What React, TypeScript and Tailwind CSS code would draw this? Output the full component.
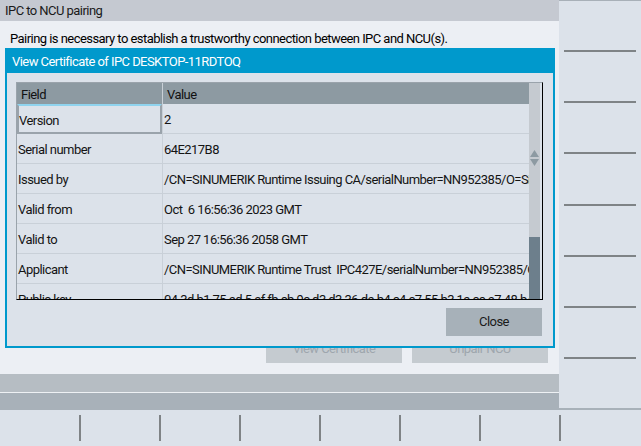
import React from "react";

const font = { fontFamily: 'Roboto, "Liberation Sans", sans-serif', letterSpacing: "-0.55px" };

const rows: [string, string][] = [
  ["Version", "2"],
  ["Serial number", "64E217B8"],
  ["Issued by", "/CN=SINUMERIK Runtime Issuing CA/serialNumber=NN952385/O=Siemens"],
  ["Valid from", "Oct  6 16:56:36 2023 GMT"],
  ["Valid to", "Sep 27 16:56:36 2058 GMT"],
  ["Applicant", "/CN=SINUMERIK Runtime Trust  IPC427E/serialNumber=NN952385/O=Siemens"],
  ["Public key", "04 3d b1 75 ad 5 af fb cb 9c d3 d3 36 da b4 c4 c7 55 b3 1a cc a7 48 b4 c1 9e"],
];

const CertTable = () => (
  <div className="flex h-[218px] w-[527px] border-t border-l border-r border-b border-t-[#9aa3ab] border-l-[#9aa3ab] border-r-black border-b-black">
    <div className="flex-1 overflow-hidden">
      <div className="flex h-[21px] bg-[#8d9aa2] pt-[2px] text-[13px] text-[#111]">
        <div className="flex w-[145px] items-center pl-[4px]">Field</div>
        <div className="-mt-[2px] w-px bg-[#c9d0d7]" />
        <div className="flex flex-1 items-center pl-[4px]">Value</div>
      </div>
      {rows.map(([k, v], i) => (
        <div key={k} className="flex h-[30px] border-b border-[#c9d0d8] text-[13px] text-[#141414]">
          {i === 0 ? (
            <div className="-mb-px flex w-[145px] items-center border-2 border-[#9aa3ab] border-t-[#8fd3ee] pt-[3px]">
              {k}
            </div>
          ) : (
            <div className="flex w-[145px] items-center pl-[1px] pt-[3px]">{k}</div>
          )}
          <div className="w-px bg-[#c9d0d8]" />
          <div className="flex flex-1 items-center overflow-hidden whitespace-pre pl-[1px] pt-[3px]">{v}</div>
        </div>
      ))}
    </div>
    <div className="flex w-[13px] pr-[2px]">
      <div className="flex flex-1 flex-col bg-[#c5cad0]">
        <div className="h-[67px]" />
        <div className="flex flex-col items-center gap-[2px]">
          <svg width="9" height="7" viewBox="0 0 9 7">
            <polygon points="4.5,0 9,7 0,7" fill="#8d9aa2" />
          </svg>
          <svg width="9" height="7" viewBox="0 0 9 7">
            <polygon points="0,0 9,0 4.5,7" fill="#8d9aa2" />
          </svg>
        </div>
        <div className="flex-1" />
        <div className="h-[62px] bg-[#6d7f8c]" />
      </div>
    </div>
  </div>
);

export default function App() {
  return (
    <div className="relative flex h-[446px] w-[641px] flex-col overflow-hidden bg-[#dce2ea]" style={font}>
      <div className="flex h-[410px]">
        <div className="flex w-[559px] flex-col">
          <div className="flex h-[21px] items-center bg-[#c5c9d1] pl-[5px] text-[13px] text-[#1a1a1a]">
            IPC to NCU pairing
          </div>
          <div className="flex flex-1 flex-col bg-[#eceff4]">
            <p className="pl-[10px] pt-[8px] text-[13px] leading-[20px] text-[#000]">
              Pairing is necessary to establish a trustworthy connection between IPC and NCU(s).
            </p>
            <div className="mt-auto mb-[11px] flex gap-[10px] pl-[266px]">
              <div className="flex h-[28px] w-[136px] items-center justify-center bg-[#c5cbd0] text-[13px] text-[#9ea6ad]">
                View Certificate
              </div>
              <div className="flex h-[28px] w-[136px] items-center justify-center bg-[#c5cbd0] text-[13px] text-[#9ea6ad]">
                Unpair NCU
              </div>
            </div>
          </div>
          <div className="h-[18px] bg-[#b6bdc3]" />
          <div className="h-px bg-[#eef1f4]" />
          <div className="h-[17px] bg-[#a8b1b9]" />
        </div>
        <div className="flex w-[82px] flex-col border-t border-b-2 border-t-[#a8b0b8] border-b-[#a8b1b9] bg-[#dce2ea]">
          {Array.from({ length: 8 }).map((_, i) => (
            <React.Fragment key={i}>
              {i > 0 && <div className="mx-[5px] h-[2px] bg-[#7f8386]" />}
              <div className="flex-1" />
            </React.Fragment>
          ))}
        </div>
      </div>
      <div className="flex h-[36px] items-center bg-[#dce2ea]">
        {Array.from({ length: 8 }).map((_, i) => (
          <div key={i} className="flex h-full w-[80px] items-center">
            {i > 0 && <div className="-ml-px h-[26px] w-[2px] bg-[#7f8386]" />}
          </div>
        ))}
      </div>

      <div className="absolute left-[5px] top-[48px] flex h-[300px] w-[550px] flex-col border-2 border-[#0099cc]">
        <div className="flex h-[23px] items-center bg-[#0099cc] pl-[5px] text-[13px] text-white">
          View Certificate of IPC DESKTOP-11RDTOQ
        </div>
        <div className="flex flex-1 flex-col bg-[#dce2ea] pt-[9px] pl-[9px]">
          <CertTable />
          <div className="mt-[8px] flex justify-end pr-[11px]">
            <div className="flex h-[28px] w-[96px] items-center justify-center bg-[#a7b1b9] text-[13px] text-[#1a1a1a]">
              Close
            </div>
          </div>
        </div>
      </div>
    </div>
  );
}
